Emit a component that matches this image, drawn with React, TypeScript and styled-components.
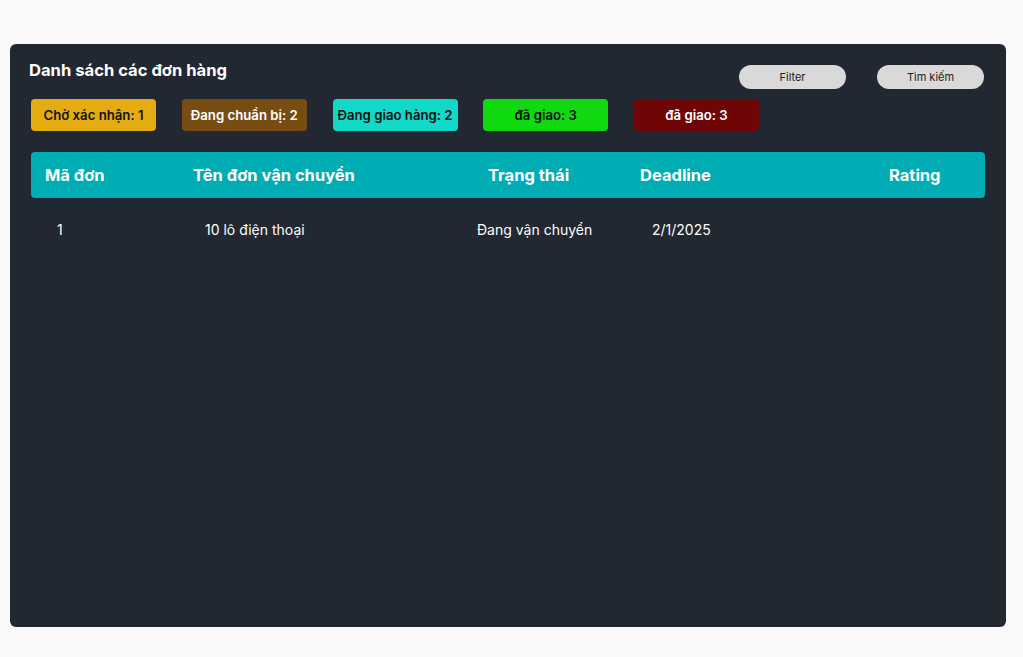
import React from "react";
import styled, { createGlobalStyle } from "styled-components";

const Global = createGlobalStyle`
  html, body { margin: 0; padding: 0; background: #fafafa; }
  body { font-family: Inter, "Noto Sans", sans-serif; }
  * { box-sizing: border-box; }
`;

const Page = styled.div`
  padding: 44px 17px 30px 10px;
`;

const Panel = styled.section`
  width: 996px;
  height: 583px;
  background: #222831;
  border-radius: 6px;
  padding: 16px 21px 0 21px;
  display: flex;
  flex-direction: column;
`;

const TopBar = styled.div`
  display: flex;
  justify-content: space-between;
  align-items: flex-start;
`;

const Title = styled.h1`
  margin: 0 0 0 -2px;
  font-size: 16.6px;
  line-height: 20px;
  font-weight: 700;
  color: #ffffff;
`;

const Actions = styled.div`
  display: flex;
  gap: 31px;
  margin-top: 5px;
  margin-right: 1px;
`;

const PillButton = styled.button`
  width: 107px;
  height: 24px;
  border: none;
  border-radius: 12px;
  background: #d9d9d9;
  color: #222;
  font-family: Inter, sans-serif;
  font-size: 11px;
  padding: 0;
`;

const Badges = styled.div`
  display: flex;
  gap: 25.75px;
  margin-top: 10px;
`;

const Badge = styled.div<{ $bg: string; $fg: string }>`
  width: 125px;
  height: 32px;
  border-radius: 4px;
  background: ${(p) => p.$bg};
  color: ${(p) => p.$fg};
  display: flex;
  align-items: center;
  justify-content: center;
  font-size: 13.2px;
  font-weight: 600;
  white-space: nowrap;
`;

const Table = styled.div`
  margin-top: 21px;
  display: flex;
  flex-direction: column;
`;

const HeaderRow = styled.div`
  height: 46px;
  background: #00adb5;
  border-radius: 4px;
  display: grid;
  grid-template-columns: 148px 295px 152px 249px 1fr;
  align-items: center;
  padding-left: 14px;
`;

const HeadCell = styled.div`
  color: #ffffff;
  font-size: 16.5px;
  line-height: 20px;
  font-weight: 700;
  white-space: nowrap;
`;

const BodyRow = styled.div`
  display: grid;
  grid-template-columns: 148px 272px 175px 1fr;
  align-items: center;
  padding: 22px 0 22px 26px;
`;

const Cell = styled.div`
  color: #ffffff;
  font-size: 14px;
  line-height: 20px;
  white-space: nowrap;
`;

const badges = [
  { label: "Chờ xác nhận: 1", bg: "#e5ac12", fg: "#111" },
  { label: "Đang chuẩn bị: 2", bg: "#784d12", fg: "#fff" },
  { label: "Đang giao hàng: 2", bg: "#10d9c8", fg: "#111" },
  { label: "đã giao: 3", bg: "#10d910", fg: "#111" },
  { label: "đã giao: 3", bg: "#700505", fg: "#fff" },
];

export default function App() {
  return (
    <Page>
      <Global />
      <Panel>
        <TopBar>
          <Title>Danh sách các đơn hàng</Title>
          <Actions>
            <PillButton>Filter</PillButton>
            <PillButton>Tìm kiếm</PillButton>
          </Actions>
        </TopBar>
        <Badges>
          {badges.map((b, i) => (
            <Badge key={i} $bg={b.bg} $fg={b.fg}>
              {b.label}
            </Badge>
          ))}
        </Badges>
        <Table>
          <HeaderRow>
            <HeadCell>Mã đơn</HeadCell>
            <HeadCell>Tên đơn vận chuyển</HeadCell>
            <HeadCell>Trạng thái</HeadCell>
            <HeadCell>Deadline</HeadCell>
            <HeadCell>Rating</HeadCell>
          </HeaderRow>
          <BodyRow>
            <Cell>1</Cell>
            <Cell>10 lô điện thoại</Cell>
            <Cell>Đang vận chuyển</Cell>
            <Cell>2/1/2025</Cell>
          </BodyRow>
        </Table>
      </Panel>
    </Page>
  );
}
